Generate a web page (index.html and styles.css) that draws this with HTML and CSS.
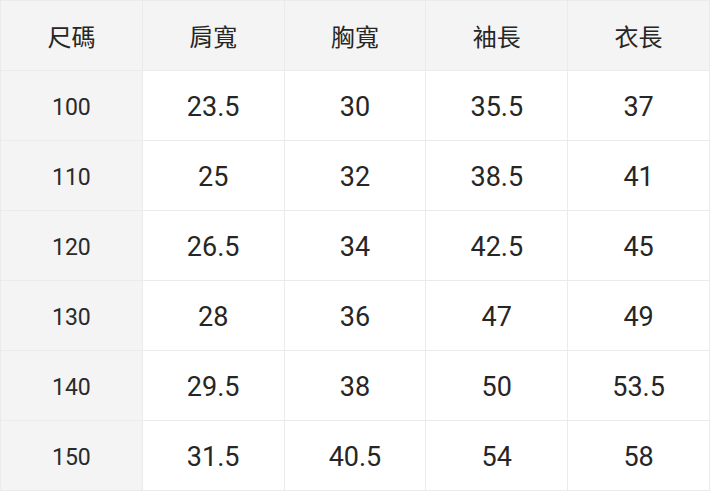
FILE: index.html
```html
<!DOCTYPE html>
<html lang="zh-Hant">
<head>
<meta charset="utf-8">
<link rel="stylesheet" href="styles.css">
</head>
<body>
<div class="table">
  <div class="cell head">尺碼</div>
  <div class="cell head">肩寬</div>
  <div class="cell head">胸寬</div>
  <div class="cell head">袖長</div>
  <div class="cell head">衣長</div>

  <div class="cell size">100</div>
  <div class="cell">23.5</div>
  <div class="cell">30</div>
  <div class="cell">35.5</div>
  <div class="cell">37</div>

  <div class="cell size">110</div>
  <div class="cell">25</div>
  <div class="cell">32</div>
  <div class="cell">38.5</div>
  <div class="cell">41</div>

  <div class="cell size">120</div>
  <div class="cell">26.5</div>
  <div class="cell">34</div>
  <div class="cell">42.5</div>
  <div class="cell">45</div>

  <div class="cell size">130</div>
  <div class="cell">28</div>
  <div class="cell">36</div>
  <div class="cell">47</div>
  <div class="cell">49</div>

  <div class="cell size">140</div>
  <div class="cell">29.5</div>
  <div class="cell">38</div>
  <div class="cell">50</div>
  <div class="cell">53.5</div>

  <div class="cell size">150</div>
  <div class="cell">31.5</div>
  <div class="cell">40.5</div>
  <div class="cell">54</div>
  <div class="cell">58</div>
</div>
</body>
</html>
```
FILE: styles.css
```css
html, body {
  margin: 0;
  padding: 0;
  background: #ffffff;
}
.table {
  width: 710px;
  box-sizing: border-box;
  display: grid;
  grid-template-columns: repeat(5, 1fr);
  grid-auto-rows: 70px;
  border-top: 1px solid #ebebeb;
  border-left: 1px solid #ebebeb;
  font-family: Roboto, "Noto Sans CJK TC", sans-serif;
  color: #262626;
}
.cell {
  box-sizing: border-box;
  display: flex;
  align-items: center;
  justify-content: center;
  border-right: 1px solid #ebebeb;
  border-bottom: 1px solid #ebebeb;
  font-size: 27px;
  padding-top: 3px;
}
.head {
  background: #f4f4f4;
  font-size: 24px;
  font-family: "Noto Sans CJK TC", sans-serif;
  padding-top: 0;
}
.size {
  background: #f4f4f4;
  font-size: 23px;
  color: #2a2a2a;
}
```
